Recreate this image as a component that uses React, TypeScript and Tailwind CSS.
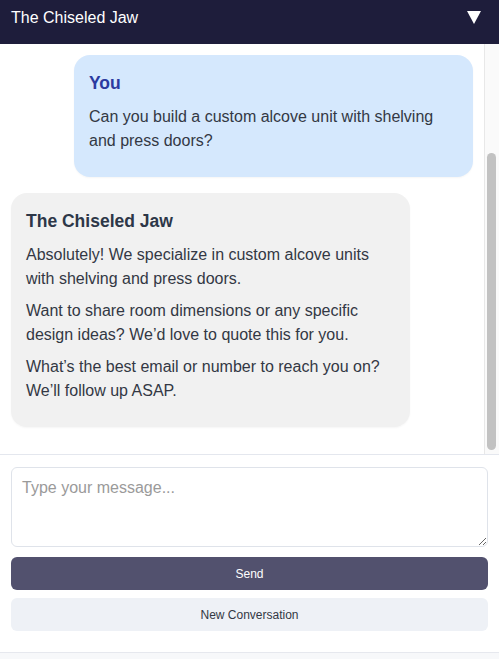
import React from 'react';

const font = { fontFamily: '"Liberation Sans", Arial, Helvetica, sans-serif' };

interface Message {
  from: 'user' | 'bot';
  paragraphs: string[];
}

const messages: Message[] = [
  {
    from: 'user',
    paragraphs: ['Can you build a custom alcove unit with shelving and press doors?'],
  },
  {
    from: 'bot',
    paragraphs: [
      'Absolutely! We specialize in custom alcove units with shelving and press doors.',
      'Want to share room dimensions or any specific design ideas? We’d love to quote this for you.',
      'What’s the best email or number to reach you on? We’ll follow up ASAP.',
    ],
  },
];

const Bubble: React.FC<{ msg: Message }> = ({ msg }) => {
  const isUser = msg.from === 'user';
  return (
    <div className={isUser ? 'flex justify-end' : 'flex justify-start'}>
      <div
        className={`w-[399px] rounded-[16px] px-[15px] pt-[16px] pb-[16px] shadow-[0_1px_2px_rgba(0,0,0,0.04)] ${
          isUser ? 'bg-[#d5e8fd]' : 'bg-[#f1f1f1]'
        }`}
      >
        <div
          className={`mb-[9px] text-[17.5px] font-bold leading-[25px] ${
            isUser ? 'text-[#2b3aa0]' : 'text-[#2d3748]'
          }`}
        >
          {isUser ? 'You' : 'The Chiseled Jaw'}
        </div>
        {msg.paragraphs.map((p, i) => (
          <p key={i} className="mb-[8px] text-[16px] leading-[24px] text-[#333844]">
            {p}
          </p>
        ))}
      </div>
    </div>
  );
};

export default function App() {
  return (
    <div className="h-[659px] w-[499px] bg-[#f7f8fa]" style={font}>
      <div className="flex h-[653px] flex-col border-b border-[#e6e8ee] bg-white">
        {/* Header */}
        <div className="flex h-[44px] shrink-0 items-start justify-between bg-[#1e1d3b] pl-[11px] pr-[18px] pt-[7px]">
          <span className="text-[16px] leading-[22px] text-white">The Chiseled Jaw</span>
          <svg width="14" height="13" viewBox="0 0 14 13" className="mt-[4px]">
            <polygon points="0,0 14,0 7,13" fill="#ffffff" />
          </svg>
        </div>

        {/* Messages + scrollbar */}
        <div className="flex h-[410px] shrink-0">
          <div className="flex flex-1 flex-col gap-[16px] overflow-hidden px-[11px] pt-[11px]">
            {messages.map((m, i) => (
              <Bubble key={i} msg={m} />
            ))}
          </div>
          <div className="w-[15px] shrink-0 border-l border-[#e8e8e8] bg-[#fafafa] pl-[2px] pt-[109px]">
            <div className="h-[297px] w-[9px] rounded-full bg-[#c2c2c2]" />
          </div>
        </div>

        {/* Input area */}
        <div className="flex flex-col border-t border-[#e4e7ee] px-[11px] pt-[12px]">
          <textarea
            placeholder="Type your message..."
            className="h-[80px] w-full rounded-[6px] border border-[#dfe3ea] px-[10px] py-[10px] text-[16px] leading-[20px] text-[#333] placeholder:text-[#9a9a9a] focus:outline-none"
            style={font}
          />
          <button className="mt-[10px] h-[33px] w-full rounded-[6px] bg-[#52516e] text-[12px] font-medium text-white">
            Send
          </button>
          <button className="mt-[8px] h-[33px] w-full rounded-[6px] bg-[#eef1f6] text-[12px] text-[#333844]">
            New Conversation
          </button>
        </div>
      </div>
    </div>
  );
}
